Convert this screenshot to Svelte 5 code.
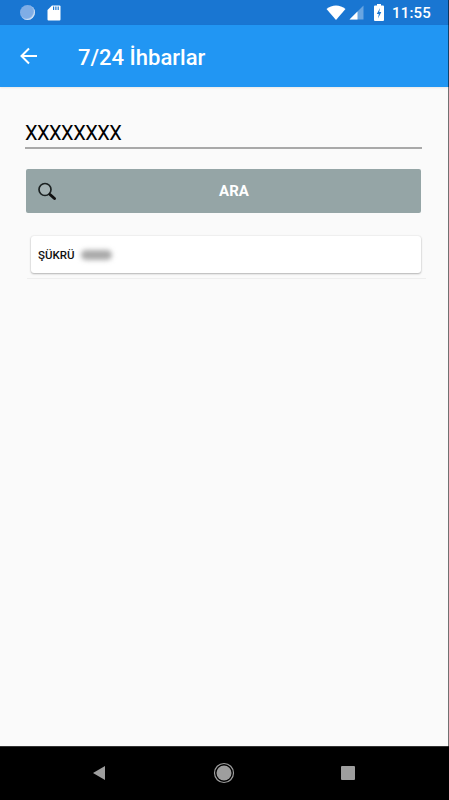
<script>
  let query = 'XXXXXXXX';
  const results = [{ name: 'ŞÜKRÜ' }];
</script>

<div class="screen">
  <div class="status">
    <div class="status-left">
      <span class="dot"></span>
      <svg class="sd" width="14" height="16" viewBox="0 0 14 16">
        <path d="M5 0.5H12.5a1 1 0 0 1 1 1V14.5a1 1 0 0 1-1 1H1.5a1 1 0 0 1-1-1V5Z" fill="#fff" />
        <path d="M6 1.5h1.2v3.4H6zM8.3 1.5h1.2v3.4H8.3zM10.6 1.5h1.2v3.4h-1.2z" fill="#1976d2" />
      </svg>
    </div>
    <div class="status-right">
      <svg width="20" height="15" viewBox="0 0 20 15">
        <path d="M0.500 4C5.800 -0.700 14.200 -0.700 19.500 4L10 15Z" fill="#fff" />
      </svg>
      <svg class="signal" width="15" height="15" viewBox="0 0 15 15">
        <path d="M14.500 0.500V14.500H0.500Z" fill="#fff" fill-opacity="0.35" />
        <path d="M8.500 6.500V14.500H0.500Z" fill="#fff" />
      </svg>
      <svg class="battery" width="10" height="17" viewBox="0 0 10 17">
        <path d="M3 0h4v1.500h2a1 1 0 0 1 1 1V16a1 1 0 0 1-1 1H1a1 1 0 0 1-1-1V2.500a1 1 0 0 1 1-1h2Z" fill="#fff" />
        <path d="M6 4 2.800 10H4.800L4 14.500 7.300 8H5.200Z" fill="#1976d2" />
      </svg>
      <span class="clock">11:55</span>
    </div>
  </div>

  <header class="appbar">
    <svg class="back" width="20" height="20" viewBox="0 0 20 20">
      <path d="M18 10H3M10 2.500 2.500 10 10 17.500" fill="none" stroke="#fff" stroke-width="2" />
    </svg>
    <h1>7/24 İhbarlar</h1>
  </header>

  <main class="content">
    <input class="search" type="text" bind:value={query} />

    <button class="ara" type="button">
      <svg class="loupe" width="20" height="20" viewBox="0 0 20 20">
        <circle cx="7" cy="8.500" r="6" fill="#a4b2b3" stroke="#1c2222" stroke-width="1.700" />
        <path d="M12 13.500l4.500 4" stroke="#111" stroke-width="3" stroke-linecap="round" />
      </svg>
      ARA
    </button>

    <ul class="list">
      {#each results as item}
        <li class="row">
          <div class="card">
            <span class="name">{item.name}</span>
            <span class="blurred"></span>
          </div>
        </li>
      {/each}
    </ul>
  </main>

  <nav class="navbar">
    <svg width="14" height="16" viewBox="0 0 14 16"><path d="M13 1V15L1 8Z" fill="#9e9e9e" /></svg>
    <svg width="22" height="22" viewBox="0 0 22 22">
      <circle cx="11" cy="11" r="9.500" fill="none" stroke="#9e9e9e" stroke-width="1.200" />
      <circle cx="11" cy="11" r="7.500" fill="#9e9e9e" />
    </svg>
    <span class="square"></span>
  </nav>
</div>

<style>
  :global(body) {
    margin: 0;
    background: #fafafa;
  }
  .screen {
    position: relative;
    width: 449px;
    height: 800px;
    display: flex;
    flex-direction: column;
    font-family: Roboto, sans-serif;
    overflow: hidden;
  }
  /* dark hairline down the right edge of the capture */
  .screen::after {
    content: '';
    position: absolute;
    top: 0;
    right: 0;
    bottom: 0;
    width: 1px;
    background: rgba(0, 0, 0, 0.55);
  }
  .status {
    height: 25px;
    flex: none;
    background: #1976d2;
    display: flex;
    align-items: center;
    justify-content: space-between;
    padding: 0 18px 0 20px;
    color: #fff;
  }
  .status-left {
    display: flex;
    align-items: center;
    gap: 12px;
  }
  .dot {
    width: 15px;
    height: 15px;
    border-radius: 50%;
    background: #7fade6;
    box-shadow: inset -1px -1px 1px #d5e4f6;
  }
  .status-right {
    display: flex;
    align-items: center;
    gap: 5px;
  }
  .signal {
    margin-left: -2px;
  }
  .battery {
    margin-left: 5px;
  }
  .clock {
    font-size: 15px;
    font-weight: 500;
    margin-left: 3px;
    letter-spacing: 0.2px;
  }
  .appbar {
    position: relative;
    height: 62px;
    flex: none;
    background: #2196f3;
    display: flex;
    align-items: center;
    padding-left: 19px;
    color: #fff;
    box-shadow: 0 1px 2px rgba(0, 0, 0, 0.08);
  }
  .back {
    margin-bottom: 1px;
  }
  .appbar h1 {
    margin: 2px 0 0 39px;
    font-size: 22px;
    font-weight: 500;
  }
  .content {
    flex: 1;
    background: #fafafa;
    padding: 34px 0 0 25px;
    display: flex;
    flex-direction: column;
  }
  .search {
    width: 397px;
    height: 28px;
    box-sizing: border-box;
    border: 0;
    border-bottom: 2px solid #a9a9a9;
    background: transparent;
    padding: 0 0 2px;
    outline: none;
    font-family: Roboto, sans-serif;
    font-size: 20px;
    letter-spacing: -0.5px;
    color: #000;
  }
  .ara {
    position: relative;
    width: 395px;
    height: 44px;
    margin: 20px 0 0 1px;
    border: 0;
    border-radius: 2px;
    padding: 0 0 0 21px;
    background: #95a5a6;
    color: #fff;
    font-family: Roboto, sans-serif;
    font-size: 15px;
    font-weight: 700;
  }
  .loupe {
    position: absolute;
    left: 12px;
    top: 12px;
  }
  .list {
    list-style: none;
    width: 399px;
    margin: 23px 0 0 2px;
    padding: 0 0 5px;
    border-bottom: 1px solid #eeeeee;
  }
  .card {
    width: 390px;
    height: 37px;
    margin-left: 4px;
    box-sizing: border-box;
    background: #fff;
    border-radius: 3px;
    box-shadow: 0 1px 2px rgba(0, 0, 0, 0.26), 0 0 2px rgba(0, 0, 0, 0.12);
    display: flex;
    align-items: center;
    padding-left: 7px;
    gap: 6px;
  }
  .name {
    font-size: 11.500px;
    font-weight: 500;
    color: #111;
  }
  .blurred {
    width: 31px;
    height: 10px;
    border-radius: 5px;
    background: #aaaaaa;
    filter: blur(2.500px);
  }
  .navbar {
    height: 54px;
    flex: none;
    box-sizing: border-box;
    background: #000;
    border-top: 1px solid #333;
    display: flex;
    align-items: center;
    justify-content: space-between;
    padding: 0 94px 2px 92px;
  }
  .square {
    width: 14px;
    height: 14px;
    border-radius: 1px;
    background: #9e9e9e;
  }
</style>
